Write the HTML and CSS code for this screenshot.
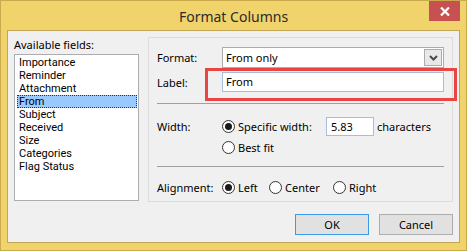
FILE: index.html
```html
<!DOCTYPE html>
<html>
<head>
<meta charset="utf-8">
<link rel="stylesheet" href="styles.css">
</head>
<body>
<div class="window">
  <div class="titlebar">
    <div class="title">Format Columns</div>
    <div class="close"><svg width="10" height="9" viewBox="0 0 10 9"><path d="M1 0.5 L9 8.5 M9 0.5 L1 8.5" stroke="#fff" stroke-width="2.2"/></svg></div>
  </div>
  <div class="client">
    <div class="main">
      <div class="fields">
        <div class="fields-label">Available fields:</div>
        <div class="listbox">
          <div class="item">Importance</div>
          <div class="item">Reminder</div>
          <div class="item">Attachment</div>
          <div class="item selected">From</div>
          <div class="item">Subject</div>
          <div class="item">Received</div>
          <div class="item">Size</div>
          <div class="item">Categories</div>
          <div class="item">Flag Status</div>
        </div>
      </div>
      <div class="group">
        <div class="row row-format">
          <div class="lbl">Format:</div>
          <div class="combo">
            <span class="combo-text">From only</span>
            <span class="combo-btn"><svg width="9" height="6" viewBox="0 0 9 6"><path d="M1 1 L4.5 4.5 L8 1" fill="none" stroke="#4a4a4a" stroke-width="2"/></svg></span>
          </div>
        </div>
        <div class="row row-label">
          <div class="lbl">Label:</div>
          <div class="textbox">From</div>
        </div>
        <div class="sep sep1"></div>
        <div class="row row-width">
          <div class="lbl">Width:</div>
          <div class="radio-item spec"><span class="radio checked"></span><span>Specific width:</span></div>
          <div class="numbox">5.83</div>
          <span class="chars">characters</span>
        </div>
        <div class="row row-best">
          <div class="lbl"></div>
          <div class="radio-item"><span class="radio"></span><span>Best fit</span></div>
        </div>
        <div class="sep sep2"></div>
        <div class="row row-align">
          <div class="lbl">Alignment:</div>
          <div class="radio-item al-left"><span class="radio checked"></span><span>Left</span></div>
          <div class="radio-item al-center"><span class="radio"></span><span>Center</span></div>
          <div class="radio-item"><span class="radio"></span><span>Right</span></div>
        </div>
      </div>
    </div>
    <div class="buttons">
      <div class="btn default">OK</div>
      <div class="btn">Cancel</div>
    </div>
  </div>
  <div class="highlight"></div>
</div>
</body>
</html>
```
FILE: styles.css
```css
html, body {
  margin: 0;
  padding: 0;
}
body {
  font-family: "Noto Sans", "Open Sans", sans-serif;
  font-size: 11px;
  color: #000;
}
.window {
  position: relative;
  width: 467px;
  height: 251px;
  box-sizing: border-box;
  border: 1px solid #c9ab4e;
  background: #f1d36b;
  display: flex;
  flex-direction: column;
}
.titlebar {
  position: relative;
  height: 29px;
  display: flex;
  align-items: center;
  justify-content: center;
}
.title {
  font-family: "Noto Sans", sans-serif;
  font-size: 14px;
  color: #2b2b2b;
  margin-top: 1px;
}
.close {
  position: absolute;
  right: 6px;
  top: 0;
  width: 31px;
  height: 20px;
  background: #c75050;
  display: flex;
  align-items: center;
  justify-content: center;
}
.client {
  margin: 0 6px;
  height: 213px;
  box-sizing: border-box;
  border: 1px solid #c2a657;
  background: #f0f0f0;
  padding: 6px 6px 0 6px;
}
.main {
  display: flex;
  gap: 9px;
  height: 165px;
}
.fields {
  width: 125px;
  display: flex;
  flex-direction: column;
}
.fields-label {
  height: 17px;
  line-height: 14px;
  padding-top: 1px;
  box-sizing: border-box;
}
.listbox {
  height: 147px;
  box-sizing: border-box;
  border: 1px solid #abadb3;
  background: #fff;
  padding: 1px 1px 0 1px;
}
.item {
  font-family: Roboto, "Noto Sans", sans-serif;
  font-size: 11px;
  height: 13px;
  line-height: 13px;
  padding-left: 3px;
  white-space: nowrap;
}
.item.selected {
  background: #99c9ff;
  outline: 1px dotted #333;
  outline-offset: -1px;
  margin-left: 1px;
  padding-left: 2px;
}
.group {
  width: 305px;
  box-sizing: border-box;
  border: 1px solid #dcdcdc;
  padding: 9px 8px 0 8px;
}
.row {
  display: flex;
  align-items: center;
}
.lbl {
  width: 65px;
  flex: none;
}
.row-format {
  height: 21px;
}
.combo {
  width: 222px;
  height: 21px;
  box-sizing: border-box;
  border: 1px solid #acacac;
  background: #fff;
  display: flex;
  align-items: center;
  justify-content: space-between;
}
.combo-text {
  padding-left: 3px;
}
.combo-btn {
  width: 18px;
  height: 17px;
  box-sizing: border-box;
  border: 1px solid #acacac;
  background: #e8e8e8;
  margin-right: 1px;
  display: flex;
  align-items: center;
  justify-content: center;
}
.row-label {
  height: 20px;
  margin-top: 4px;
}
.textbox {
  width: 222px;
  height: 20px;
  box-sizing: border-box;
  border: 1px solid #a7bdd9;
  background: #fff;
  padding-left: 3px;
  line-height: 18px;
}
.sep {
  height: 1px;
  background: #a0a0a0;
}
.sep1 {
  margin-top: 11px;
}
.row-width {
  height: 19px;
  margin-top: 13px;
}
.radio-item {
  display: flex;
  align-items: center;
  gap: 3px;
  white-space: nowrap;
}
.radio {
  width: 13px;
  height: 13px;
  box-sizing: border-box;
  border: 1px solid #333;
  border-radius: 50%;
  background: #fff;
  flex: none;
  position: relative;
}
.radio.checked::after {
  content: "";
  position: absolute;
  left: 2px;
  top: 2px;
  width: 7px;
  height: 7px;
  border-radius: 50%;
  background: #1a1a1a;
}
.spec {
  width: 104px;
}
.numbox {
  width: 48px;
  height: 19px;
  box-sizing: border-box;
  border: 1px solid #a7bdd9;
  background: #fff;
  padding-left: 4px;
  line-height: 17px;
}
.chars {
  margin-left: 3px;
}
.row-best {
  height: 19px;
  margin-top: 2px;
}
.sep2 {
  margin-top: 9px;
}
.row-align {
  height: 19px;
  margin-top: 11px;
}
.al-left {
  width: 47px;
}
.al-center {
  width: 64px;
}
.buttons {
  display: flex;
  justify-content: flex-end;
  gap: 10px;
  margin-top: 12px;
}
.btn {
  width: 74px;
  height: 21px;
  box-sizing: border-box;
  border: 1px solid #adadad;
  background: #e1e1e1;
  display: flex;
  align-items: center;
  justify-content: center;
}
.btn.default {
  border-color: #3c9be8;
}
.highlight {
  position: absolute;
  left: 204px;
  top: 67px;
  width: 252px;
  height: 33px;
  box-sizing: border-box;
  border: 3px solid #e84543;
}
```
